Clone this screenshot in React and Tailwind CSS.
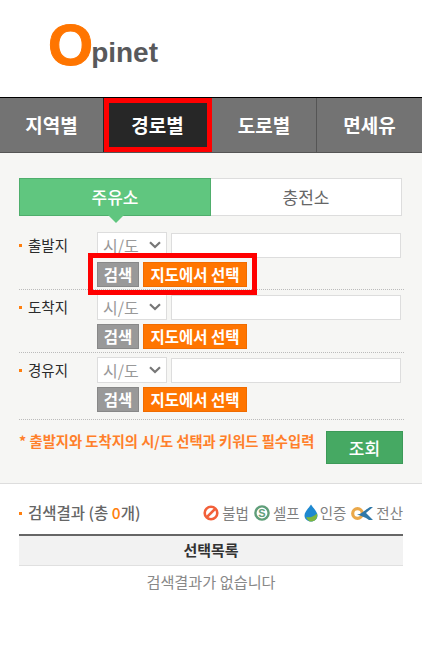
function Select() {
  return (
    <div className="relative w-[70px] h-[26px] shrink-0 bg-white border border-[#dddddd]">
      <select className="w-full h-full appearance-none bg-transparent pl-[5px] text-[16px] leading-[24px] text-[#999999] outline-none">
        <option>시/도</option>
      </select>
      <svg className="absolute right-[5px] top-[8px] pointer-events-none" width="12" height="8" viewBox="0 0 12 8" fill="none">
        <path d="M1 1.2 L6 6 L11 1.2" stroke="#777777" strokeWidth="2.2" />
      </svg>
    </div>
  );
}

function Row({ label, pb, pt }) {
  return (
    <div className={`flex border-b border-dotted border-[#bbbbbb] ${pt} ${pb}`}>
      <div className="w-[78px] shrink-0 flex items-center h-[26px] text-[14.5px] text-[#2b2b2b]">
        <span className="w-[3px] h-[3px] bg-[#ff7f0e] mr-[6px]" />
        {label}
      </div>
      <div className="flex-1">
        <div className="flex items-center gap-[4px]">
          <Select />
          <div className="w-[230px] h-[25px] bg-white border border-[#dddddd]" />
        </div>
        <div className="flex gap-[4px] mt-[4px]">
          <button className="w-[42px] h-[25px] bg-[#999999] border border-[#888888] text-white text-[15.5px] font-bold leading-none">검색</button>
          <button className="w-[104px] h-[25px] bg-[#ff7500] border border-[#f06c00] text-white text-[15.5px] font-bold leading-none">지도에서 선택</button>
        </div>
      </div>
    </div>
  );
}

function Tab({ children, active, cls }) {
  return (
    <div className={`flex items-center justify-center text-white text-[19px] font-bold ${active ? "bg-[#272727]" : ""} ${cls}`}>
      {children}
    </div>
  );
}

function Legend({ icon, label }) {
  return (
    <span className="flex items-center">
      {icon}
      <span className="text-[14.5px] text-[#808080]">{label}</span>
    </span>
  );
}

export default function App() {
  return (
    <div className="relative w-[422px] h-[646px] overflow-hidden bg-white" style={{ fontFamily: '"Noto Sans CJK KR", "Liberation Sans", sans-serif' }}>
      {/* logo */}
      <header className="h-[97px] pl-[49px] pt-[15px]">
        <div className="flex items-start h-[60px]" style={{ fontFamily: '"Liberation Sans", sans-serif' }}>
          <span className="text-[58px] leading-[60px] font-bold text-[#ff7500] -ml-[1px] [-webkit-text-stroke:1px_#ff7500]">O</span>
          <span className="text-[28px] leading-[30px] font-bold text-[#58595b] mt-[23px] -ml-[2px]">pinet</span>
        </div>
      </header>

      {/* nav */}
      <nav className="relative h-[56px] flex bg-[#737373] border-t border-t-black border-b border-b-[#555555]">
        <Tab cls="w-[103px]">지역별</Tab>
        <Tab cls="w-[109px]" active>경로별</Tab>
        <Tab cls="w-[105px] border-r border-[#555555]">도로별</Tab>
        <Tab cls="flex-1">면세유</Tab>
        <div className="absolute left-[104px] top-0 w-[108px] h-[54px] border-[5px] border-[#ff0000]" />
      </nav>

      {/* search form */}
      <section className="h-[331px] bg-[#f6f6f4] border-b border-[#dddddd] pt-[25px] px-[19px]">
        <div className="relative flex h-[38px] w-[383px]">
          <div className="w-[192px] bg-[#60c67f] border border-[#4fae6c] flex items-center justify-center text-white text-[17px] font-medium">주유소</div>
          <div className="flex-1 bg-white border border-l-0 border-[#dddddd] flex items-center justify-center text-[#666666] text-[17px]">충전소</div>
          <div className="absolute left-[89px] top-[37px] w-0 h-0 border-x-[8px] border-x-transparent border-t-[8px] border-t-[#60c67f]" />
        </div>
        <div className="mt-[16px] w-[385px]">
          <Row label="출발지" pb="pb-[2px]" />
          <Row label="도착지" pt="pt-[4px]" pb="pb-[3px]" />
          <Row label="경유지" pt="pt-[4px]" pb="pb-[7px]" />
        </div>
        <div className="flex justify-between w-[384px] mt-[11px]">
          <span className="text-[14.3px] font-bold text-[#ff7f2a] leading-[20px]">* 출발지와 도착지의 시/도 선택과 키워드 필수입력</span>
          <button className="w-[77px] h-[33px] bg-[#46a963] border border-[#3c9a58] text-white text-[17px] font-medium">조회</button>
        </div>
      </section>

      {/* results */}
      <section className="px-[19px] pt-[17px]">
        <div className="flex items-center justify-between h-[24px] mb-[9px]">
          <div className="flex items-center text-[15.5px] text-[#666666] font-medium">
            <span className="w-[3px] h-[3px] bg-[#ff7f0e] mr-[6px]" />
            검색결과 (총&nbsp;<span className="text-[#ff7f0e]">0</span>개)
          </div>
          <div className="flex items-center">
            <Legend label="불법" icon={
              <svg className="mr-[3px]" width="16" height="16" viewBox="0 0 16 16" fill="none">
                <circle cx="8" cy="8" r="6.3" stroke="#f2603a" strokeWidth="2.6" />
                <path d="M3.8 12.2 L12.2 3.8" stroke="#f2603a" strokeWidth="2.6" />
              </svg>} />
            <Legend label="셀프" icon={
              <svg className="ml-[5px] mr-[3px]" width="16" height="16" viewBox="0 0 16 16" fill="none">
                <circle cx="8" cy="8" r="6.6" fill="#fff" stroke="#5f9e79" strokeWidth="2.4" />
                <text x="8" y="11.8" textAnchor="middle" fontSize="11" fontWeight="700" fill="#5f9e79" fontFamily="Liberation Sans">S</text>
              </svg>} />
            <Legend label="인증" icon={
              <svg className="ml-[4px] mr-[2px]" width="14" height="18" viewBox="0 0 14 18">
                <path d="M7 0.5 C9 4 13.5 7.5 13.5 11.5 C13.5 15 10.5 17.5 7 17.5 C3.5 17.5 0.5 15 0.5 11.5 C0.5 7.5 5 4 7 0.5 Z" fill="#1e88d0" />
                <path d="M2 13 C5 14 9 13 13 9.5 C14 13 12 17.5 7 17.5 C5 17.5 3 15.5 2 13 Z" fill="#7cb63e" />
              </svg>} />
            <Legend label="전산" icon={
              <svg className="ml-[5px] mr-[2px]" width="23" height="15" viewBox="0 0 23 15" fill="none">
                <circle cx="6.5" cy="7.5" r="4.8" stroke="#eaa84a" strokeWidth="3.2" />
                <path d="M6 8.5 C10 8.5 14 4 19 1 L22 1 L15 7 L22 14 L18 14 C14 11 10 10 6 8.5 Z" fill="#2f78a8" />
              </svg>} />
          </div>
        </div>
        <div className="h-[32px] bg-[#f2f2f2] border-t-2 border-t-[#666666] border-b border-b-[#e0e0e0] flex items-center justify-center text-[15px] font-bold text-[#333333]">선택목록</div>
        <div className="h-[30px] flex items-center justify-center text-[15.2px] text-[#888888]">검색결과가 없습니다</div>
      </section>

      {/* annotation */}
      <div className="absolute left-[88px] top-[253px] w-[169px] h-[42px] border-[5px] border-[#ff0000]" />
    </div>
  );
}
